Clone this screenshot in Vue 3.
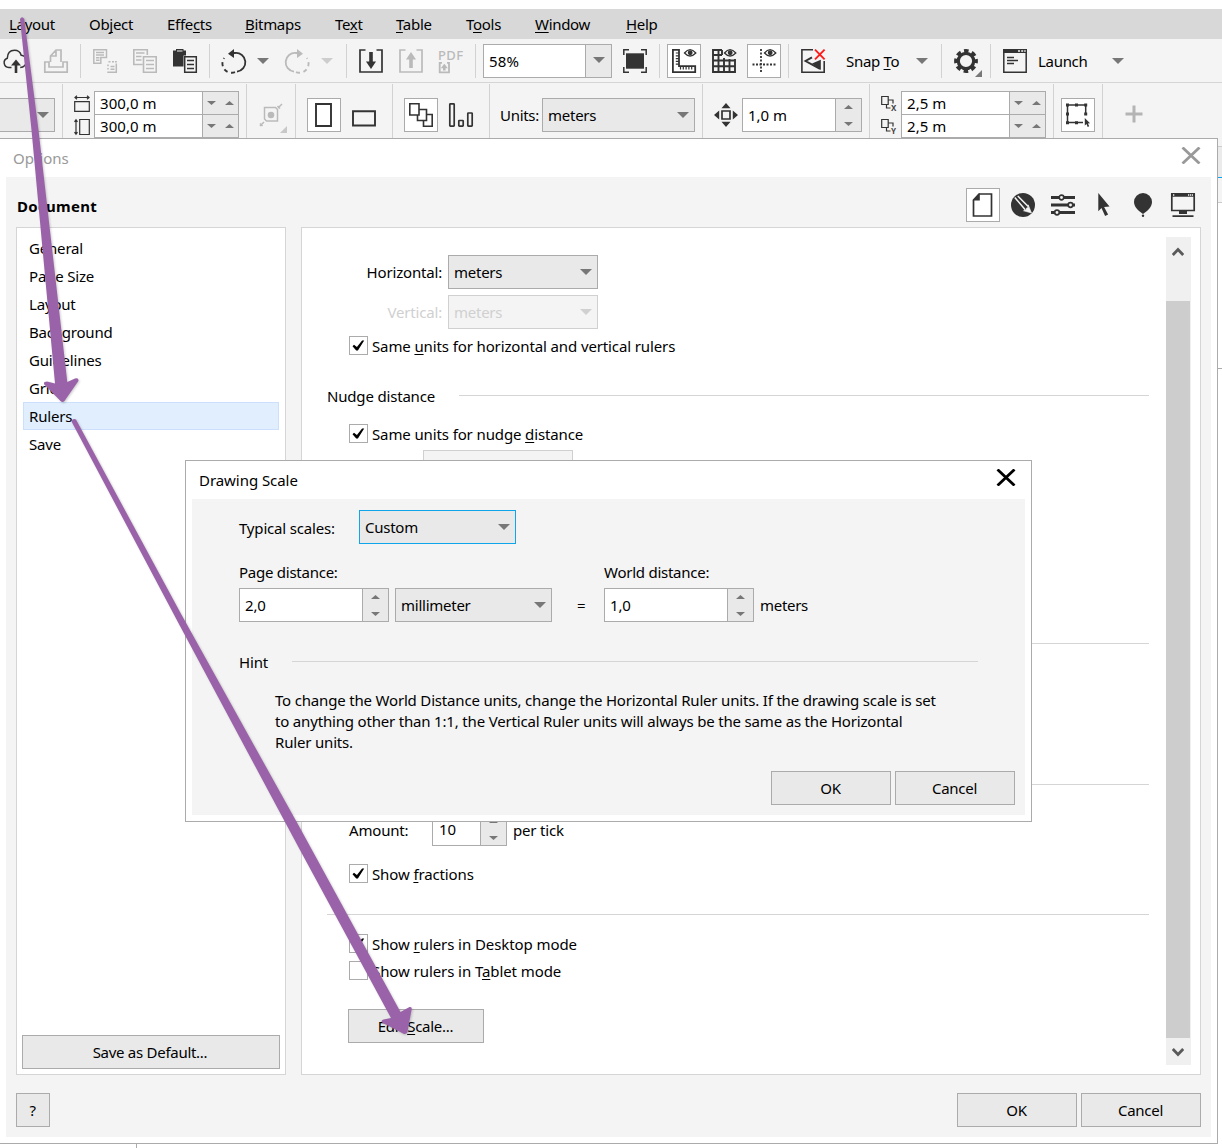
<script setup>
import { h } from 'vue'

const menus = [
  { pre: '', key: 'L', post: 'ayout', w: 80 },
  { pre: 'Ob', key: 'j', post: 'ect', w: 78 },
  { pre: 'Effe', key: 'c', post: 'ts', w: 78 },
  { pre: '', key: 'B', post: 'itmaps', w: 90 },
  { pre: 'Te', key: 'x', post: 't', w: 61 },
  { pre: '', key: 'T', post: 'able', w: 70 },
  { pre: 'T', key: 'o', post: 'ols', w: 69 },
  { pre: '', key: 'W', post: 'indow', w: 91 },
  { pre: '', key: 'H', post: 'elp', w: 60 },
]
const pages = ['General', 'Page Size', 'Layout', 'Background', 'Guidelines', 'Grid', 'Rulers', 'Save']

const Down = () => h('svg', { width: 12, height: 6, viewBox: '0 0 12 6' }, [h('path', { d: 'M0 0h12L6 6z', fill: 'currentColor' })])
const Up = () => h('svg', { width: 9, height: 4, viewBox: '0 0 9 4' }, [h('path', { d: 'M0 4h9L4.500 0z', fill: 'currentColor' })])
const Dn = () => h('svg', { width: 9, height: 4, viewBox: '0 0 9 4' }, [h('path', { d: 'M0 0h9L4.500 4z', fill: 'currentColor' })])
const Tick = () => h('svg', { width: 17, height: 17, viewBox: '0 0 17 17' }, [h('path', { d: 'M2.500 9.200l1.500-1.400 2.900 2.300 5.200-6.700 2.100.2-6.300 9.800-1.700.2z', fill: '#000' })])
const Eye = () => h('g', {}, [
  h('path', { d: 'M12.500 4Q18 -2.600 23.800 4Q18 10 12.500 4z', fill: 'none', stroke: 'currentColor', 'stroke-width': 1.300 }),
  h('circle', { cx: 18.200, cy: 3.800, r: 1.700, fill: 'currentColor' }),
])
</script>

<template>
  <div class="screen">
    <nav class="menubar">
      <span v-for="m in menus" :key="m.key + m.post" :style="{ width: m.w + 'px' }">{{ m.pre }}<u>{{ m.key }}</u>{{ m.post }}</span>
    </nav>

    <div class="bar standard">
      <svg class="ic" viewBox="0 0 24 24"><path d="M8.500 18.500H5.800A4.800 4.800 0 0 1 4.300 9.200C4.500 4 7 1.200 11.500 1.200c3.500 0 5.800 2 6.700 5 3.400.3 5.200 3 5 6.300-.2 3.600-2.200 5.800-6 6" /><path d="M13 24V14" stroke-width="2.600" /><path class="f" d="M8 16.500L13 10.500l5 6z" /></svg>
      <svg class="ic off" viewBox="0 0 24 24"><path d="M5 13H.8V23.200H23.200V13H19V18H5zM6.500 13V7L12 1h5v12M6.500 7H12V1" stroke-width="1.700" /></svg>
      <i class="sep"></i>
      <svg class="ic off" viewBox="0 0 24 24"><path d="M.8.8h12.700v7.700H7.800v5.700H.8zM3 3.600h8M3 6h8M3 8.800h3.500M3 11.300h3.500" /><path d="M15.500 12.800h2M19 12.800h2M22 12.800h1.800M15 15.500v1.800M15 19v1.500M14.300 23.300h9.700M23.300 14.500v9" /><path d="M17.500 17.500h4M17.500 20.300h4" /></svg>
      <svg class="ic off" viewBox="0 0 24 24"><path d="M9.500 15.500H.8V.8h13.500V6M3 4h8.500M3 7.500h5.500M3 11h5.500M10.500 7.800H23.200V23.200H10.500zM13 11.500h8M13 15.500h8M13 19.500h8" stroke-width="1.600" /></svg>
      <svg class="ic" viewBox="0 0 24 24"><path class="f" d="M0 1.500h3V0h7.500v1.500H13V6.500h-2.500v11H0z" /><path d="M4 2h5.500" stroke="#f4f4f4" stroke-width="1" /><path d="M11.700 7.800H23.300V23.300H11.700z" fill="#f4f4f4" /><path d="M14 11.500h7M14 15.500h7M14 19.500h7" /></svg>
      <i class="sep"></i>
      <svg class="ic" viewBox="0 0 24 24"><path d="M10 4h3a9.200 9.200 0 0 1 2 18.600" stroke-width="1.800" /><path class="f" d="M6 4.800L12 0v9z" /><path d="M13 23.200A9.300 9.300 0 0 1 2.200 9" stroke-width="1.900" stroke-dasharray="4 3.500" /></svg>
      <b class="arr"><Down /></b>
      <svg class="ic off" viewBox="0 0 24 24"><path d="M14 4h-3a9.200 9.200 0 0 0-2 18.600" stroke-width="1.800" /><path class="f" d="M18 4.800L12 0v9z" /><path d="M11 23.200A9.300 9.300 0 0 0 21.800 9" stroke-width="1.900" stroke-dasharray="4 3.500" /></svg>
      <b class="arr pale"><Down /></b>
      <i class="sep"></i>
      <svg class="ic" viewBox="0 0 24 24"><path d="M6.500 1H1v22h22V1h-5.500" stroke-width="1.700" /><path d="M12 3v11" stroke-width="3.600" /><path class="f" d="M7 12.500h10L12 20z" /></svg>
      <svg class="ic off" viewBox="0 0 24 24"><path d="M6.500 1H1v22h22V1h-5.500" stroke-width="1.700" /><path d="M12 19V8" stroke-width="3.600" /><path class="f" d="M7 10.500h10L12 3z" /></svg>
      <svg class="ic off pdf" viewBox="0 0 26 24"><text x="0" y="10.500" textLength="25">PDF</text><path d="M4 13.800H1.700V23.300H11V13.800H9" stroke-width="1.800" /><path d="M6.300 21.500v-5" stroke-width="2.600" /><path class="f" d="M2.800 19.200l3.500-4.500 3.500 4.500z" /></svg>
      <i class="sep"></i>
      <div class="combo zoombox"><span>58%</span><b><Down /></b></div>
      <svg class="ic" viewBox="0 0 24 24"><path class="f" d="M3 4.300h18v15.400H3z" /><path d="M6 .8H.8V6M18 .8h5.200V6M.8 18v5.200H6M23.200 18v5.200H18" /></svg>
      <i class="sep"></i>
      <div class="boxed"><svg class="ic" viewBox="0 0 24 24"><path d="M.9.900H7V17.200H23.200V23.200H.9z" stroke-width="1.800" /><path d="M3.800 4h3M3.800 6.800h3M3.800 9.600h3M3.800 12.400h3M3.800 15.200h3M8.500 17v3.500M11.300 17v3.500M14.100 17v3.500M16.900 17v3.500M19.700 17v3.500" stroke-width="1.200" /><Eye /></svg></div>
      <svg class="ic" viewBox="0 0 24 24"><path d="M10 1H1v22h22V10M1 6h9M1 11.500h22M1 17.200h22M6.500 1v22M12 9v14M17.500 10v13M10 1v5" stroke-width="1.900" /><Eye /></svg>
      <div class="boxed"><svg class="ic" viewBox="0 0 24 24"><path d="M9 0v24M.5 15.500H24" stroke-width="1.800" stroke-dasharray="2 1.500" /><Eye /></svg></div>
      <i class="sep"></i>
      <svg class="ic" viewBox="0 0 24 24"><path d="M12 .8H.9V23.200H23.200V12" stroke-width="1.600" /><path d="M11 8.300L4.500 12 19 19.800" stroke-width="1.900" /><path class="f" d="M11 14.500l8.800-3.800v10.300z" /><path class="red" d="M14 .7l9.600 9.600M23.600.7L14 10.300" /></svg>
      <span class="t">Snap <u>T</u>o</span>
      <b class="arr"><Down /></b>
      <i class="sep"></i>
      <div class="flyout"><svg class="ic" viewBox="0 0 24 24"><circle cx="12" cy="12" r="7.700" stroke-width="3.200" /><circle cx="12" cy="12" r="10.200" stroke-width="3.400" stroke-dasharray="4.600 3.410" stroke-dashoffset="2.300" /></svg><svg class="corner" width="7" height="7" viewBox="0 0 7 7"><path d="M7 0v7H0z" /></svg></div>
      <i class="sep"></i>
      <svg class="ic" viewBox="0 0 24 24"><path d="M.8.8H23.200V23.200H.8z" /><path class="f" d="M0 0h24v4H0z" /><path d="M15 2h2M18.200 2h2M21.200 2h1.500" stroke="#f4f4f4" /><path d="M4 8.500h7M4 11.500h11M4 14.500h7" /></svg>
      <span class="t">Launch</span>
      <b class="arr"><Down /></b>
    </div>

    <div class="bar property">
      <div class="combo tail"><b><Down /></b></div>
      <i class="sep"></i>
      <div class="pair">
        <svg width="16" height="18" viewBox="0 0 16 18"><path d="M.7 6.700h14.600v9.600H.7zM1 2.500h14M3 .8L1 2.500 3 4.200M13 .8l2 1.700-2 1.700" /></svg>
        <svg width="16" height="18" viewBox="0 0 16 18"><path d="M5.700 1.500h9.600v15H5.700zM2 2v14M.5 3.800L2 1.800l1.500 2M.5 14.200l1.500 2 1.500-2" /></svg>
      </div>
      <div class="double"><div><span>300,0 m</span><b><Dn /><Up /></b></div><div><span>300,0 m</span><b><Dn /><Up /></b></div></div>
      <i class="sep"></i>
      <div class="flyout pale2"><svg class="ic off" viewBox="0 0 24 24"><path d="M5.500 4.500h11l2 2v11.500h-11l-2-2zM1 23l4-4M19 5l4-4M18.500 3l2.500 2.500M1 20.500L3.500 23" /><circle class="f" cx="12" cy="12" r="3.300" /></svg><svg class="corner" width="7" height="7" viewBox="0 0 7 7"><path d="M7 0v7H0z" /></svg></div>
      <i class="sep"></i>
      <div class="boxed"><svg class="ic" viewBox="0 0 24 24"><path d="M4 1H19V23H4z" stroke-width="1.900" /></svg></div>
      <svg class="ic" viewBox="0 0 24 24"><path d="M1 8.300H23V22.500H1z" stroke-width="1.900" /></svg>
      <i class="sep"></i>
      <div class="boxed"><svg class="ic" viewBox="0 0 24 24"><g fill="#fff" stroke-width="1.600"><path d="M14.500 11.500h8.700v11.700h-8.700z" /><path d="M8.500 6.500h9v11h-9z" /><path d="M.8.8h9.200v11.200H.8z" /></g></svg></div>
      <svg class="ic" viewBox="0 0 24 24"><g stroke-width="1.700"><rect x=".8" y=".8" width="4.400" height="22.400" rx=".6" /><rect x="9.800" y="17.500" width="4.400" height="5.700" rx=".6" /><rect x="18.800" y="10" width="4.400" height="13.200" rx=".6" /></g></svg>
      <i class="sep"></i>
      <span class="t">Units:</span>
      <div class="combo flat units"><span>meters</span><b><Down /></b></div>
      <i class="sep"></i>
      <svg class="ic" viewBox="0 0 24 24"><path d="M8 8h8v8H8z" stroke-width="1.700" /><path class="f" d="M12 0l4.500 5.200h-9zM12 24l4.500-5.200h-9zM0 12l5.200-4.500v9zM24 12l-5.200-4.500v9z" /></svg>
      <div class="spin nudge"><span>1,0 m</span><b><Up /><Dn /></b></div>
      <i class="sep"></i>
      <div class="pair dup">
        <svg v-for="a in ['X', 'Y']" :key="a" width="18" height="18" viewBox="0 0 18 18"><path d="M.7 1.500h6.500v8H.7zM5.500 9.500v3.500h4M7 5h5v3.500" /><text x="10" y="15.500">{{ a }}</text></svg>
      </div>
      <div class="double"><div><span>2,5 m</span><b><Dn /><Up /></b></div><div><span>2,5 m</span><b><Dn /><Up /></b></div></div>
      <i class="sep"></i>
      <div class="boxed"><svg class="ic" viewBox="0 0 24 24"><path d="M1.500 2h18.200v17.500H1.500z" stroke-width="1.500" /><path d="M17 12h7v12h-7z" fill="#fff" stroke="none" /><path class="f" d="M0 .5h3v3H0zM9 .5h3v3H9zM18.200.5h3v3h-3zM0 9.500h3v3H0zM18.200 9.500h3v3h-3zM0 18.200h3v3H0zM9 18.200h3v3H9zM18.800 15l5.200 5.300-2.100.2 1.300 2.800-1.500.7-1.200-2.900-1.700 1.400z" /></svg></div>
      <i class="sep"></i>
      <svg class="plus" width="18" height="18" viewBox="0 0 18 18"><path d="M9 .5v17M.5 9h17" /></svg>
    </div>
    <div class="docker"><i></i><i></i><i></i></div>
    <div class="status"></div>

    <section class="options">
      <header><span>Options</span><svg width="20" height="17" viewBox="0 0 20 17"><path d="M1.500.500L18.500 16.500M18.500.500L1.500 16.500" /></svg></header>
      <div class="body">
        <div class="top">
          <h1>Document</h1>
          <div class="tabs">
            <div class="boxed"><svg class="ic" viewBox="0 0 24 24"><path d="M8 1h12.500v22h-18V7z" stroke-width="1.700" /><path class="f" d="M8.800 0v7.500H1.600z" /></svg></div>
            <div><svg class="ic" viewBox="0 0 24 24"><circle class="f" cx="12" cy="12" r="12" /><path d="M3.800 4.500L14.200 16.800M6.800 3L17.200 13.500" stroke="#f4f4f4" stroke-width="1.500" /><path d="M17.200 11.800L20.500 20 12.500 17.800l2.500-1 .6-1.800 1.900-.8z" fill="#f4f4f4" stroke="#f4f4f4" stroke-width=".6" /></svg></div>
            <div><svg class="ic" viewBox="0 0 24 24"><path d="M0 4.500h24M0 12h24M0 19.500h24" stroke-width="2.900" /><g fill="#f4f4f4" stroke-width="1.700"><circle cx="10.500" cy="4.500" r="2.300" /><circle cx="19.500" cy="12" r="2.300" /><circle cx="6" cy="19.500" r="2.300" /></g></svg></div>
            <div><svg class="ic" viewBox="0 0 24 24"><path class="f" d="M7.300 0l11.200 13.500-5.400.4 4 7.700-3 1.500-3.600-8.200-3.200 3.400z" /></svg></div>
            <div><svg class="ic" viewBox="0 0 24 24"><path class="f" d="M12 0a9 9 0 0 1 9 9c0 5-4.500 9-9 12-4.500-3-9-7-9-12a9 9 0 0 1 9-9z" /><circle class="f" cx="12" cy="22.800" r="1.200" /></svg></div>
            <div><svg class="ic" viewBox="0 0 24 24"><path d="M.8 1h22.400v16.500H.8z" stroke-width="1.700" /><path class="f" d="M0 0h24v3.800H0zM8 18h8v3H8zM1.500 22.200h21v1.800h-21z" /><path d="M2 2h1.500M17 2h5" stroke="#f4f4f4" stroke-width="1.400" stroke-dasharray="1.300 .7" /></svg></div>
          </div>
        </div>

        <div class="panes">
          <aside>
            <ul><li v-for="p in pages" :key="p" :class="{ on: p === 'Rulers' }">{{ p }}</li></ul>
            <button>Save as Default...</button>
          </aside>
          <main>
            <div class="form">
              <div class="field"><label>Horizontal:</label><div class="combo flat w150"><span>meters</span><b><Down /></b></div></div>
              <div class="field dim"><label>Vertical:</label><div class="combo flat w150"><span>meters</span><b><Down /></b></div></div>
              <div class="check c1"><i><Tick /></i><span>Same <u>u</u>nits for horizontal and vertical rulers</span></div>
              <div class="group nudge-head"><span>Nudge distance</span><hr></div>
              <div class="check c2"><i><Tick /></i><span>Same units for nudge <u>d</u>istance</span></div>
              <div class="combo flat w150 ghost"></div>
              <hr class="r1"><hr class="r2">
              <div class="amount"><label>Amount:</label><div class="spin ticks"><span>10</span><b><Up /><Dn /></b></div><span>per tick</span></div>
              <div class="check c3"><i><Tick /></i><span>Show <u>f</u>ractions</span></div>
              <hr class="r3">
              <div class="check c4"><i><Tick /></i><span>Show <u>r</u>ulers in Desktop mode</span></div>
              <div class="check c5"><i></i><span>Show rulers in T<u>a</u>blet mode</span></div>
              <button class="edit">Edit <u>S</u>cale...</button>
            </div>
            <div class="scroll">
              <svg width="12" height="10" viewBox="0 0 12 10"><path d="M.8 8L6 2.500 11.200 8" /></svg>
              <div class="thumb"></div>
              <svg width="12" height="10" viewBox="0 0 12 10"><path d="M.8 2L6 7.500 11.200 2" /></svg>
            </div>
          </main>
        </div>

        <footer><button class="help">?</button><div><button>OK</button><button>Cancel</button></div></footer>
      </div>
    </section>

    <section class="scale">
      <header><span>Drawing Scale</span><svg width="20" height="17" viewBox="0 0 20 17"><path d="M1.500.500L18.500 16.500M18.500.500L1.500 16.500" /></svg></header>
      <div class="sbody">
        <div class="typical"><label>Typical scales:</label><div class="combo flat w157 focus"><span>Custom</span><b><Down /></b></div></div>
        <div class="dist">
          <div class="dl">
            <label>Page distance:</label>
            <div class="drow"><div class="spin w150"><span>2,0</span><b><Up /><Dn /></b></div><div class="combo flat w157"><span>millimeter</span><b><Down /></b></div><em>=</em></div>
          </div>
          <div class="dl">
            <label>World distance:</label>
            <div class="drow"><div class="spin w150"><span>1,0</span><b><Up /><Dn /></b></div><span class="unit">meters</span></div>
          </div>
        </div>
        <div class="group hint"><span>Hint</span><hr></div>
        <p>To change the World Distance units, change the Horizontal Ruler units. If the drawing scale is set<br>to anything other than 1:1, the Vertical Ruler units will always be the same as the Horizontal<br>Ruler units.</p>
        <div class="sbtns"><button>OK</button><button>Cancel</button></div>
      </div>
    </section>

    <svg class="arrows" width="1222" height="1148" viewBox="0 0 1222 1148">
      <path d="M20 19Q22 15.500 24.300 19L38.500 130L67.300 382L75 378.500Q79 377.500 78.400 381L64.500 401Q62.500 403 60.500 401L44.300 384.500Q43 381.500 47 381.500L55 383.500L31.500 130z" />
      <path d="M71.500 421.500Q72.500 418 76 419.500L180 612L300 828L400.500 1012L409.500 1007Q412.500 1006.500 411.500 1010L407.500 1032Q406 1035 403 1033.500L382 1022.500Q380.500 1020.500 383.500 1019.500L391 1018L300 850L180 626z" />
    </svg>
  </div>
</template>

<style>
body { margin: 0; overflow: hidden; }
</style>

<style scoped>
* { box-sizing: border-box; }
.screen {
  position: relative; width: 1222px; height: 1148px; overflow: hidden; background: #fff; color: #000;
  font: 15px/20px "Noto Sans", "Open Sans", sans-serif; letter-spacing: -0.18px; white-space: nowrap; padding-top: 9px;
}
u { text-decoration-thickness: 1px; text-underline-offset: 2px; text-decoration-skip-ink: none; }
i, em { font-style: normal; }
svg { display: block; flex: none; }
.menubar { display: flex; align-items: center; height: 30px; padding-left: 9px; background: #d8d8d8; letter-spacing: -0.3px; }
.bar { display: grid; align-items: center; background: #f4f4f4; }
.standard {
  height: 44px; padding-left: 3px; border-bottom: 1px solid #d5d5d5;
  grid-template-columns: 41px 36px 13px 40px 40px 36px 13px 35px 28px 36px 25px 13px 40px 39px 37px 8px 140px 36px 8px 45px 35px 41px 13px 45px 70px 25px 13px 36px 13px 35px 74px auto;
}
.property {
  height: 56px; padding-bottom: 1px;
  grid-template-columns: 62px 12px 20px 152px 13px 36px 12px 45px 40px 12px 45px 40px 11px 42px 160px 12px 28px 127px 12px 20px 152px 8px 41px 23px auto;
  grid-template-rows: 55px;
}
.sep { width: 1px; height: 34px; background: #d2d2d2; }
.property .sep { height: 54px; margin-top: 1px; }
.ic { width: 24px; height: 24px; color: #333; fill: none; stroke: currentColor; stroke-width: 1.500; overflow: visible; }
.ic.off { color: #bababa; }
.property > .ic, .property > .boxed, .property > .flyout, .property > .combo, .property > .spin, .property > .t { margin-top: 9px; }
.ic .f { fill: currentColor; stroke: none; }
.ic .red { stroke: #ff1a1a; stroke-width: 1.900; }
.pdf { width: 26px; }
.pdf text { font: 500 13px "Noto Sans", sans-serif; letter-spacing: 0; fill: currentColor; stroke: none; }
.arr { color: #777; font-weight: 400; }
.arr.pale { color: #cdcdcd; }
.boxed { display: flex; align-items: center; justify-content: center; width: 34px; height: 34px; border: 1px solid #ababab; background: #fff; }
.flyout { display: flex; align-items: flex-end; width: 30px; height: 24px; }
.corner { margin: 0 0 -4px -3px; fill: #777; }
.pale2 .corner { margin-left: -3px; margin-bottom: -6px; fill: #c8c8c8; }
.t { letter-spacing: -0.3px; }
.t + .arr { margin-left: 0; }
.combo { display: flex; height: 34px; border: 1px solid #ababab; background: #fff; }
.combo span { flex: 1; padding-left: 5px; line-height: 33px; letter-spacing: -0.25px; }
.combo b { display: flex; align-items: center; justify-content: center; width: 24px; padding-bottom: 2px; color: #777; }
.zoombox { width: 129px; }
.zoombox span { letter-spacing: 0.2px; }
.zoombox b { width: 26px; border-left: 1px solid #ababab; background: #e9e9e9; }
.flat { background: #e9e9e9; }
.flat b { width: 23px; padding-bottom: 1px; }
.tail { width: 55px; border-left: 0; background: #e9e9e9; justify-content: flex-end; }
.tail b { width: 23px; padding-bottom: 0; }
.units { width: 153px; }
.w150 { width: 150px; }
.w157 { width: 157px; }
.focus { border-color: #0ea5ea; }
.spin { display: flex; height: 34px; border: 1px solid #ababab; background: #fff; }
.spin span { flex: 1; padding-left: 5px; line-height: 33px; }
.spin b { display: flex; flex-direction: column; align-items: center; justify-content: space-between; width: 26px; padding: 6px 0 5px; border-left: 1px solid #ababab; background: #e9e9e9; color: #777; }
.nudge { width: 120px; }
.nudge span { letter-spacing: 0; }
.pair { display: flex; flex-direction: column; gap: 5px; margin-top: 10px; fill: none; stroke: #333; stroke-width: 1.200; }
.pair svg { overflow: visible; }
.pair text { font: 700 8px/8px "Noto Sans", sans-serif; letter-spacing: 0; fill: #444; stroke: none; }
.double { display: flex; flex-direction: column; width: 145px; height: 47px; margin-top: 8px; border: 1px solid #ababab; background: #fff; }
.double div { display: flex; height: 22px; }
.double div + div { height: 23px; border-top: 1px solid #ababab; }
.double span { flex: 1; padding-left: 5px; line-height: 23px; letter-spacing: 0.05px; }
.double b { display: flex; align-items: center; justify-content: space-between; width: 36px; padding: 0 4px; border-left: 1px solid #ababab; background: #e9e9e9; color: #777; }
.plus { margin-top: 7px; stroke: #b4b4b4; stroke-width: 3; }
.docker { width: 4px; height: 1004px; margin: -1px 0 0 auto; background: #fff; }
.docker i { display: block; border-bottom: 1px solid #ccc; height: 9px; background: #f4f4f4; }
.docker i:nth-child(2) { height: 31px; background: #ebebeb; border-color: #0ea5ea; }
.docker i:nth-child(3) { height: 25px; }
.docker::after { content: ""; display: block; height: 165px; border-bottom: 1px solid #ababab; }
.status { width: 137px; height: 6px; border-right: 1px solid #ababab; }

button { height: 34px; width: 120px; padding: 0 1px 0 0; border: 1px solid #ababab; border-radius: 0; background: #e9e9e9; color: #000; font: inherit; letter-spacing: -0.28px; }
.options { position: absolute; left: 0; top: 138px; width: 1218px; height: 1006px; border: 1px solid #ababab; border-left: 0; background: #fff; padding: 0 6px; }
header { display: flex; justify-content: space-between; height: 38px; fill: none; stroke-width: 2.800; }
.options header { padding: 0 9px 0 7px; color: #999; stroke: #999; }
.options header span { line-height: 39px; letter-spacing: 0; }
.options header svg { margin: 8px 1px 0 0; }
.body { height: 960px; padding: 11px 10px 0; background: #f4f4f4; }
.top { display: flex; justify-content: space-between; height: 39px; }
h1 { margin: 0 0 0 1px; font-size: 15px; line-height: 36px; font-weight: 700; letter-spacing: 0.3px; }
.tabs { display: flex; gap: 6px; margin-right: 1px; }
.tabs > div { display: flex; align-items: center; justify-content: center; width: 34px; height: 34px; }
.panes { display: flex; gap: 15px; height: 848px; }
aside, main { border: 1px solid #d5d5d5; background: #fff; display: flex; }
aside { flex-direction: column; justify-content: space-between; width: 270px; padding: 6px 5px 5px; }
aside button { width: 258px; padding-right: 2px; }
ul { margin: 0 1px; padding: 0; list-style: none; }
li { height: 28px; padding-left: 5px; border: 1px solid transparent; line-height: 27px; }
li.on { border-color: #cce0fb; background: #e0eefe; }
main { flex: 1; justify-content: space-between; padding: 9px 9px 9px 25px; }
.form { width: 822px; padding-top: 18px; }
.form hr, .group hr { border: 0; height: 1px; background: #d5d5d5; margin: 0; }
.field { display: flex; height: 34px; margin-bottom: 6px; line-height: 34px; }
.field label { width: 115px; margin-right: 6px; text-align: right; }
.dim { color: #d0d0d0; }
.dim .combo { border-color: #d0d0d0; background: #f4f4f4; }
.dim b { color: #d0d0d0; }
.check { display: flex; align-items: center; height: 19px; margin-left: 22px; letter-spacing: -0.12px; }
.check i { display: flex; width: 19px; height: 19px; margin-right: 4px; border: 1px solid #ababab; background: #fff; }
.check span { line-height: 20px; padding-top: 1px; }
.c1 { margin-top: 7px; }
.group { display: flex; align-items: center; }
.nudge-head { height: 20px; margin-top: 30px; }
.nudge-head span, .hint span { padding-top: 1px; }
.nudge-head span { width: 132px; }
.nudge-head hr, .hint hr { flex: 1; }
.c2 { margin-top: 19px; }
.ghost { margin: 7px 0 0 96px; border-color: #d0d0d0; background: #f4f4f4; }
.form .r1 { margin-top: 159px; }
.form .r2 { margin-top: 140px; }
.amount { display: flex; height: 34px; margin: 27px 0 0 22px; line-height: 37px; }
.amount label { width: 83px; }
.ticks { width: 75px; margin-right: 6px; }
.ticks span { padding-left: 6px; }
.c3 { margin-top: 18px; }
.form .r3 { margin-top: 31px; }
.c4 { margin-top: 19px; }
.c5 { margin-top: 8px; }
.c4 span, .c5 span { letter-spacing: -0.08px; }
.edit { display: block; width: 136px; margin: 29px 0 0 21px; }
.scroll { display: flex; flex-direction: column; align-items: center; width: 25px; padding: 10px 1px 0 0; background: #f0f0f0; fill: none; stroke: #5a5a5a; stroke-width: 2.800; }
.thumb { width: 24px; height: 737px; margin: 44px 0 9px; background: #cdcdcd; }
footer { display: flex; justify-content: space-between; margin-top: 18px; }
footer div { display: flex; gap: 4px; }
.help { width: 34px; }

.scale { position: absolute; left: 185px; top: 460px; width: 847px; height: 362px; border: 1px solid #ababab; background: #fff; padding: 0 6px; }
.scale header { padding: 0 9px 0 7px; stroke: #000; }
.scale header span { line-height: 39px; letter-spacing: -0.05px; }
.scale header svg { margin-top: 8px; }
.sbody { height: 316px; padding: 11px 10px 0 47px; background: #f4f4f4; }
.typical { display: flex; line-height: 36px; }
.typical label { width: 120px; }
.dist { display: flex; margin-top: 16px; }
.dl { width: 365px; }
.dl label { display: block; height: 26px; line-height: 21px; letter-spacing: -0.25px; }
.drow { display: flex; line-height: 34px; }
.drow > * + * { margin-left: 6px; }
.drow > em { margin-left: 25px; }
.unit { letter-spacing: -0.3px; }
.hint { width: 739px; height: 20px; margin-top: 29px; }
.hint span { width: 53px; }
p { margin: 19px 0 0 36px; line-height: 21px; }
.sbtns { display: flex; justify-content: flex-end; gap: 4px; margin-top: 18px; }
.arrows { position: absolute; left: 0; top: 0; fill: #9a62a8; filter: drop-shadow(1px 1px 1px rgba(0, 0, 0, .2)); pointer-events: none; }
</style>
